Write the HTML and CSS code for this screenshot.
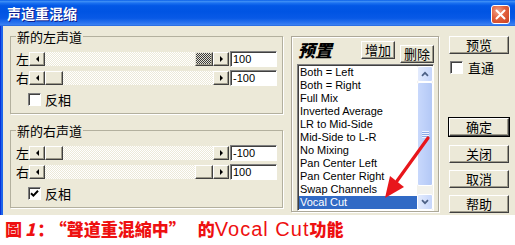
FILE: index.html
```html
<!DOCTYPE html>
<html lang="zh">
<head>
    <meta charset="UTF-8">
    <title>声道重混缩</title>
    <link rel="stylesheet" href="styles.css">
</head>
<body>
    <div class="window">
        <div class="titlebar">
            <span class="title">声道重混缩</span>
            <span class="close">
                <svg width="11" height="11" viewBox="0 0 11 11"><path d="M1.5 1.5l8 8M9.5 1.5l-8 8" stroke="#fff" stroke-width="2" stroke-linecap="round"/></svg>
            </span>
        </div>
        <div class="client">
            <div class="channels">
                <fieldset class="group">
                    <legend>新的左声道</legend>
                    <div class="row">
                        <span class="lbl">左</span>
                        <div class="hscroll">
                            <span class="sbtn"><span class="tri-left"></span></span>
                            <span class="track end"><span class="thumb focus"></span></span>
                            <span class="sbtn"><span class="tri-right"></span></span>
                        </div>
                        <span class="field">100</span>
                    </div>
                    <div class="row">
                        <span class="lbl">右</span>
                        <div class="hscroll">
                            <span class="sbtn"><span class="tri-left"></span></span>
                            <span class="track"><span class="thumb"></span></span>
                            <span class="sbtn"><span class="tri-right"></span></span>
                        </div>
                        <span class="field">-100</span>
                    </div>
                    <div class="check invert">
                        <span class="box"></span>反相
                    </div>
                </fieldset>
                <fieldset class="group second">
                    <legend>新的右声道</legend>
                    <div class="row">
                        <span class="lbl">左</span>
                        <div class="hscroll">
                            <span class="sbtn"><span class="tri-left"></span></span>
                            <span class="track"><span class="thumb"></span></span>
                            <span class="sbtn"><span class="tri-right"></span></span>
                        </div>
                        <span class="field">-100</span>
                    </div>
                    <div class="row">
                        <span class="lbl">右</span>
                        <div class="hscroll">
                            <span class="sbtn"><span class="tri-left"></span></span>
                            <span class="track end"><span class="thumb"></span></span>
                            <span class="sbtn"><span class="tri-right"></span></span>
                        </div>
                        <span class="field">100</span>
                    </div>
                    <div class="check invert">
                        <span class="box">
                            <svg width="9" height="9" viewBox="0 0 9 9"><path d="M1 4.2l2.4 2.4L8 1.8" stroke="#000" stroke-width="2" fill="none"/></svg>
                        </span>反相
                    </div>
                </fieldset>
            </div>

            <div class="presets">
                <div class="preset-head">
                    <span class="preset-title">预置</span>
                    <span class="btn small add">增加</span>
                    <span class="btn small">删除</span>
                </div>
                <div class="list">
                    <ul class="items">
                        <li>Both = Left</li>
                        <li>Both = Right</li>
                        <li>Full Mix</li>
                        <li>Inverted Average</li>
                        <li>LR to Mid-Side</li>
                        <li>Mid-Side to L-R</li>
                        <li>No Mixing</li>
                        <li>Pan Center Left</li>
                        <li>Pan Center Right</li>
                        <li>Swap Channels</li>
                        <li class="selected">Vocal Cut</li>
                    </ul>
                    <div class="vscroll">
                        <span class="vbtn">
                            <svg width="8" height="6" viewBox="0 0 8 6"><path d="M1 4.8L4 1.8l3 3" stroke="#4d6185" stroke-width="1.7" fill="none"/></svg>
                        </span>
                        <span class="vthumb"><span class="grip"></span></span>
                        <span class="vtrack"></span>
                        <span class="vbtn">
                            <svg width="8" height="6" viewBox="0 0 8 6"><path d="M1 1.2L4 4.2l3-3" stroke="#4d6185" stroke-width="1.7" fill="none"/></svg>
                        </span>
                    </div>
                </div>
            </div>

            <div class="actions">
                <span class="btn">预览</span>
                <div class="check bypass">
                    <span class="box"></span>直通
                </div>
                <span class="btn default">确定</span>
                <span class="btn close-btn">关闭</span>
                <span class="btn">取消</span>
                <span class="btn">帮助</span>
            </div>
        </div>
    </div>

    <div class="caption">圖<span class="num">1</span>：<span class="quote">“聲道重混縮中”</span><span class="de">的</span><span class="latin">Vocal Cut</span>功能</div>

    <svg class="arrow" width="515" height="245" viewBox="0 0 515 245">
        <path d="M428 138L397 181" stroke="#e8161b" stroke-width="3.2" stroke-linecap="round"/>
        <path d="M385 198L390 176L404 187Z" fill="#e8161b"/>
    </svg>
</body>
</html>
```

FILE: styles.css
```css
* {
    box-sizing: border-box;
}

body {
    margin: 0;
    width: 515px;
    height: 245px;
    overflow: hidden;
    position: relative;
    background: #fff;
    color: #000;
    font-family: "Noto Sans CJK SC", sans-serif;
    font-size: 13px;
}

.window {
    height: 215px;
    display: flex;
    flex-direction: column;
    background: linear-gradient(to right, #0831d9 0, #0831d9 1px, #1c64ea 1px);
}

.titlebar {
    height: 26px;
    flex-shrink: 0;
    display: flex;
    align-items: center;
    justify-content: space-between;
    padding: 0 5px 0 7px;
    background: linear-gradient(to bottom, #0a5fe8 0%, #3d8ef5 6%, #1a70f0 12%, #0358e6 22%, #0054e3 45%, #0859e6 70%, #2a74ef 88%, #3c82f2 96%, #1d5fd9 100%);
}

.title {
    color: #fff;
    font-weight: bold;
    font-size: 14px;
    line-height: 16px;
    text-shadow: 1px 1px #0f1d8a;
}

.close {
    width: 19px;
    height: 19px;
    margin-top: 3px;
    border: 1px solid #fff;
    border-radius: 3px;
    background: radial-gradient(circle at 35% 30%, #f0a38c 0, #e2603c 45%, #c94020 100%);
    display: flex;
    align-items: center;
    justify-content: center;
}

.client {
    flex: 1;
    margin-left: 3px;
    background: #ece9d8;
    display: flex;
    align-items: flex-start;
    padding: 3px 0 0 7px;
}

.channels {
    width: 273px;
}

.group {
    margin: 0;
    padding: 7px 5px 7px 5px;
    border: 1px solid #b3b09e;
    box-shadow: 1px 1px 0 #fff;
}

.group.second {
    margin-top: 9px;
}

.group legend {
    padding: 0 1px;
    line-height: 15px;
    font-size: 13px;
}

.row {
    display: flex;
    align-items: center;
    height: 16px;
}

.row + .row {
    margin-top: 3px;
}

.lbl {
    width: 13px;
    line-height: 16px;
}

.hscroll {
    width: 200px;
    height: 14px;
    display: flex;
}

.sbtn,
.thumb,
.btn {
    background: #ece9d8;
    border: 1px solid;
    border-color: #fff #404040 #404040 #fff;
    box-shadow: inset -1px -1px #9d9a8a;
}

.sbtn {
    width: 16px;
    height: 14px;
    display: flex;
    align-items: center;
    justify-content: center;
}

.tri-left {
    border-top: 3px solid transparent;
    border-bottom: 3px solid transparent;
    border-right: 3px solid #000;
}

.tri-right {
    border-top: 3px solid transparent;
    border-bottom: 3px solid transparent;
    border-left: 3px solid #000;
}

.track {
    flex: 1;
    display: flex;
    background: repeating-conic-gradient(#fff 0 25%, #ece9d8 0 50%) 0 0 / 2px 2px;
}

.track.end {
    justify-content: flex-end;
}

.thumb {
    width: 18px;
    height: 14px;
}

.thumb.focus {
    background: repeating-conic-gradient(#3a3a3a 0 25%, #e4e2d6 0 50%) 0 0 / 2px 2px;
    border-color: #e4e2d6 #404040 #404040 #e4e2d6;
}

.field {
    width: 47px;
    height: 16px;
    margin-left: 1px;
    padding-left: 2px;
    background: #fff;
    border: 1px solid;
    border-color: #808080 #fff #fff #808080;
    box-shadow: inset 1px 1px #404040;
    font-family: "Liberation Sans", sans-serif;
    font-size: 11px;
    line-height: 14px;
}

.check {
    display: flex;
    align-items: center;
    height: 13px;
    line-height: 13px;
}

.check.invert {
    margin: 7px 0 0 12px;
}

.box {
    width: 13px;
    height: 13px;
    margin-right: 4px;
    background: #fff;
    border: 1px solid;
    border-color: #808080 #fff #fff #808080;
    box-shadow: inset 1px 1px #404040;
    display: flex;
    align-items: center;
    justify-content: center;
}

.presets {
    width: 148px;
    height: 176px;
    margin: 7px 0 0 8px;
    padding: 4px 4px 0 5px;
    border: 1px solid #aca899;
    box-shadow: inset 1px 1px #fff, 1px 1px 0 #fff;
    display: flex;
    flex-direction: column;
}

.preset-head {
    display: flex;
    align-items: center;
    height: 18px;
}

.preset-title {
    margin-left: 1px;
    font-size: 17px;
    font-weight: 900;
    font-style: italic;
    line-height: 18px;
}

.btn {
    display: block;
    width: 60px;
    height: 18px;
    text-align: center;
    line-height: 16px;
    font-size: 13px;
}

.btn.small {
    width: 34px;
}

.btn.add {
    margin-left: auto;
    margin-right: 5px;
}

.list {
    flex: 1;
    margin-top: 5px;
    display: flex;
    padding: 1px 0 0 1px;
    background: #fff;
    border: 1px solid;
    border-color: #808080 #fff #fff #808080;
    box-shadow: inset 1px 1px #404040;
    overflow: hidden;
}

.items {
    flex: 1;
    margin: 0;
    padding: 0;
    list-style: none;
    font-family: "Liberation Sans", sans-serif;
    font-size: 11px;
}

.items li {
    height: 13px;
    line-height: 13px;
    padding-left: 1px;
    white-space: nowrap;
}

.items li.selected {
    background: #316ac5;
    color: #fff;
}

.vscroll {
    width: 16px;
    display: flex;
    flex-direction: column;
    background: #f3f2ec;
}

.vbtn {
    height: 16px;
    flex-shrink: 0;
    border: 1px solid #fff;
    border-radius: 2px;
    background: linear-gradient(to right, #e3ebfd, #c6d6fb);
    display: flex;
    align-items: center;
    justify-content: center;
}

.vthumb {
    height: 104px;
    border: 1px solid #fff;
    border-radius: 2px;
    background: linear-gradient(to right, #c8d8fc, #b3c8f6);
    display: flex;
    align-items: center;
    justify-content: center;
}

.grip {
    width: 7px;
    height: 7px;
    background: repeating-linear-gradient(to bottom, #eef3fe 0 1px, #8cabea 1px 2px);
}

.vtrack {
    flex: 1;
}

.actions {
    width: 60px;
    margin: 7px 0 0 10px;
    display: flex;
    flex-direction: column;
}

.check.bypass {
    margin: 7px 0 0 1px;
}

.check.bypass .box {
    margin-right: 5px;
}

.btn.default {
    margin-top: 44px;
    box-shadow: inset -1px -1px #9d9a8a, 0 0 0 1px #000;
}

.btn.close-btn {
    margin-top: 9px;
}

.btn + .btn:not(.close-btn) {
    margin-top: 7px;
}

.btn.default + .btn.close-btn {
    margin-top: 9px;
}

.caption {
    padding: 4px 0 0 5px;
    color: #ee1010;
    font-family: "Noto Sans CJK TC", sans-serif;
    font-weight: 900;
    font-size: 17px;
    line-height: 20px;
    white-space: nowrap;
}

.caption .num {
    font-style: italic;
    margin: 0 2px 0 3px;
}

.caption .quote {
    margin-left: 4px;
}

.caption .de {
    margin-left: 12px;
}

.caption .latin {
    font-family: "Liberation Sans", sans-serif;
    font-weight: normal;
    font-size: 20px;
    letter-spacing: 1px;
}

.arrow {
    position: absolute;
    left: 0;
    top: 0;
    pointer-events: none;
}
```
